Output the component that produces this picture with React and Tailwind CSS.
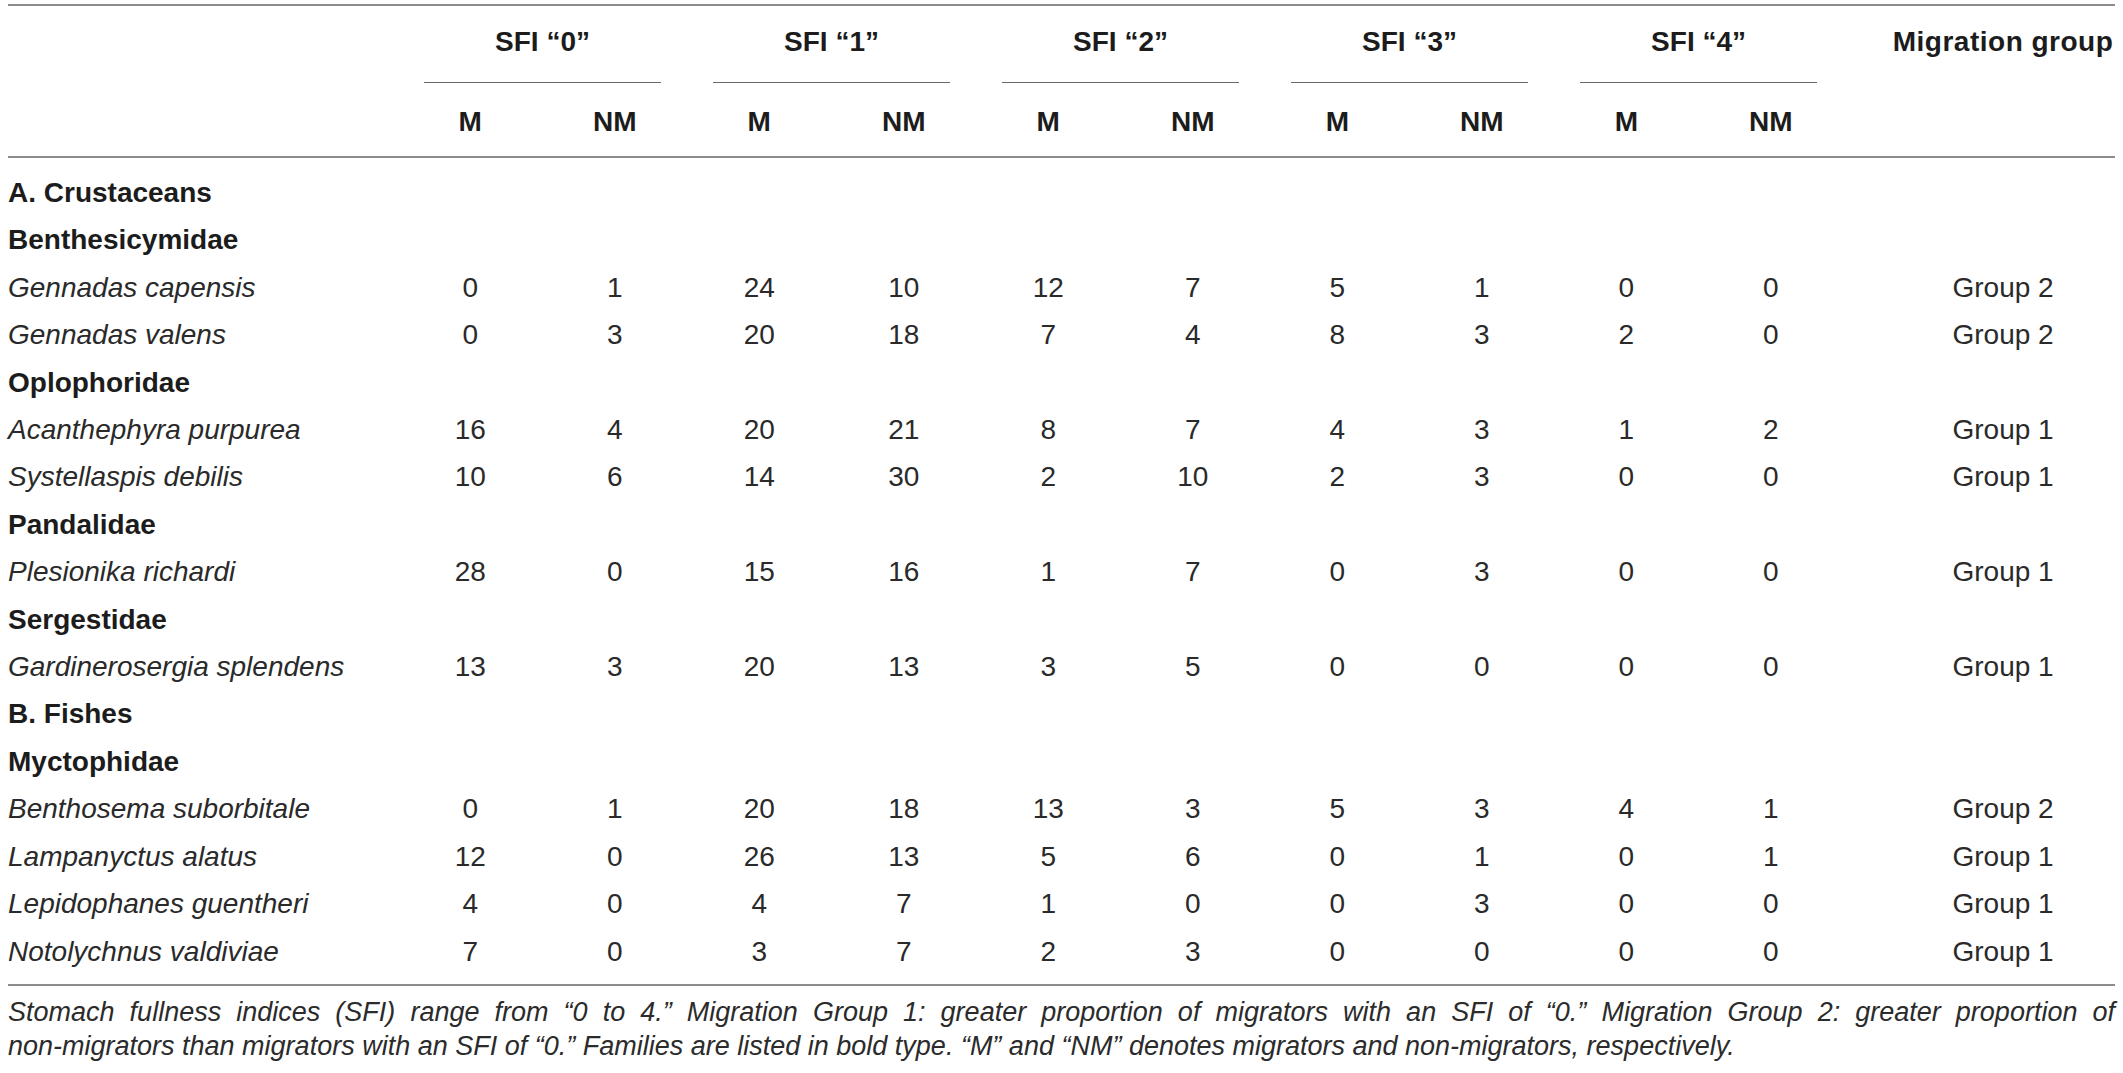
import React from 'react';

const groups = ['0', '1', '2', '3', '4'];

const rows = [
    { type: 'section', label: 'A. Crustaceans' },
    { type: 'family', label: 'Benthesicymidae' },
    { label: 'Gennadas capensis', values: [0, 1, 24, 10, 12, 7, 5, 1, 0, 0], group: 'Group 2' },
    { label: 'Gennadas valens', values: [0, 3, 20, 18, 7, 4, 8, 3, 2, 0], group: 'Group 2' },
    { type: 'family', label: 'Oplophoridae' },
    { label: 'Acanthephyra purpurea', values: [16, 4, 20, 21, 8, 7, 4, 3, 1, 2], group: 'Group 1' },
    { label: 'Systellaspis debilis', values: [10, 6, 14, 30, 2, 10, 2, 3, 0, 0], group: 'Group 1' },
    { type: 'family', label: 'Pandalidae' },
    { label: 'Plesionika richardi', values: [28, 0, 15, 16, 1, 7, 0, 3, 0, 0], group: 'Group 1' },
    { type: 'family', label: 'Sergestidae' },
    { label: 'Gardinerosergia splendens', values: [13, 3, 20, 13, 3, 5, 0, 0, 0, 0], group: 'Group 1' },
    { type: 'section', label: 'B. Fishes' },
    { type: 'family', label: 'Myctophidae' },
    { label: 'Benthosema suborbitale', values: [0, 1, 20, 18, 13, 3, 5, 3, 4, 1], group: 'Group 2' },
    { label: 'Lampanyctus alatus', values: [12, 0, 26, 13, 5, 6, 0, 1, 0, 1], group: 'Group 1' },
    { label: 'Lepidophanes guentheri', values: [4, 0, 4, 7, 1, 0, 0, 3, 0, 0], group: 'Group 1' },
    { label: 'Notolychnus valdiviae', values: [7, 0, 3, 7, 2, 3, 0, 0, 0, 0], group: 'Group 1' },
];

export default function App() {
    return (
        <div className="min-h-screen bg-white px-[8px] pt-[4px] font-['Liberation_Sans',Arial,sans-serif] text-[28px] text-[#2a2a2a]">
            <table className="w-full table-fixed border-collapse">
                <colgroup>
                    <col className="w-[390px]" />
                    {Array.from({ length: 10 }).map((_, i) => (
                        <col key={i} className="w-[144.5px]" />
                    ))}
                    <col />
                </colgroup>
                <thead>
                    <tr className="border-t-2 border-[#8c8c8c]">
                        <th />
                        {groups.map(g => (
                            <th key={g} colSpan={2} className="px-0 pt-[20px] font-bold text-[#1c1c1c]">
                                <div className="mx-[26px] border-b border-[#6a6a6a] pb-[24px] leading-[32px]">SFI “{g}”</div>
                            </th>
                        ))}
                        <th className="pl-[48px] pt-[20px] align-top font-bold leading-[32px] tracking-[0.5px] text-[#1c1c1c] whitespace-nowrap">Migration group</th>
                    </tr>
                    <tr className="border-b-2 border-[#8c8c8c]">
                        <th />
                        {groups.map(g => (
                            <React.Fragment key={g}>
                                <th className="pt-[23px] pb-[18px] font-bold leading-[32px] text-[#1c1c1c]">M</th>
                                <th className="pt-[23px] pb-[18px] font-bold leading-[32px] text-[#1c1c1c]">NM</th>
                            </React.Fragment>
                        ))}
                        <th />
                    </tr>
                </thead>
                <tbody className="border-b-2 border-[#8c8c8c]">
                    <tr className="h-[12px]"><td colSpan={12} /></tr>
                    {rows.map((row, i) => (
                        row.type ? (
                            <tr key={i}>
                                <td colSpan={12} className="p-0 font-bold leading-[47.4px] text-[#1c1c1c] whitespace-nowrap">{row.label}</td>
                            </tr>
                        ) : (
                            <tr key={i}>
                                <td className="p-0 italic leading-[47.4px] whitespace-nowrap">{row.label}</td>
                                {row.values.map((v, j) => (
                                    <td key={j} className="p-0 text-center leading-[47.4px]">{v}</td>
                                ))}
                                <td className="pl-[48px] text-center leading-[47.4px]">{row.group}</td>
                            </tr>
                        )
                    ))}
                    <tr className="h-[10px]"><td colSpan={12} /></tr>
                </tbody>
            </table>
            <div className="mt-[9px] text-[27px] italic leading-[34px] text-[#2b2b2b]">
                <p className="text-justify [text-align-last:justify] whitespace-nowrap">
                    Stomach fullness indices (SFI) range from “0 to 4.” Migration Group 1: greater proportion of migrators with an SFI of “0.” Migration Group 2: greater proportion of
                </p>
                <p>
                    non-migrators than migrators with an SFI of “0.” Families are listed in bold type. “M” and “NM” denotes migrators and non-migrators, respectively.
                </p>
            </div>
        </div>
    );
}
